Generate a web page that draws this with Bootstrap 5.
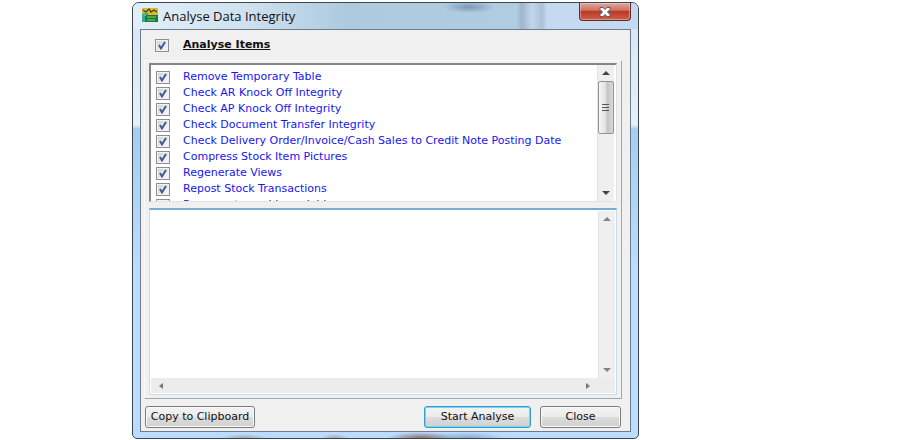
<!DOCTYPE html>
<html lang="en">
<head>
<meta charset="utf-8">
<meta name="viewport" content="width=device-width, initial-scale=1">
<title>Analyse Data Integrity</title>
<link href="https://cdn.jsdelivr.net/npm/bootstrap@5.3.0/dist/css/bootstrap.min.css" rel="stylesheet">
<style>
body{font-family:"DejaVu Sans",sans-serif;font-size:11px;line-height:16px;color:#111;background:#fff;padding:2px 264px 2px 132px}
.dialog{border:1px solid #3c4650;border-radius:7px 7px 5px 5px;padding:0 7px 6px;
  background:radial-gradient(ellipse 24px 4px at 22% 100%,#a9a9a2,transparent),
  radial-gradient(ellipse 14px 4px at 40% 100%,#a9a9a2,transparent),
  radial-gradient(ellipse 34px 6px at 57% 100%,#8b6f68,transparent),
  radial-gradient(ellipse 40px 6px at 66% 100%,#86a8cd,transparent),
  linear-gradient(#cfe2f2 0,#dceaf7 10%,#e4f0fa 28%,#a5cdf3 29%,#b9dcff 60%,#b9dcff 100%)}
.titlebar{height:26px;margin:0 -7px;padding:0 7px 0 8px;border-radius:6px 6px 0 0;
  background:radial-gradient(ellipse 26px 6px at 336px 4px,#7d98b3,transparent),
  linear-gradient(90deg,#e2eff9 0,#cfe2f0 22%,#aecadf 42%,#b0cce1 76%,#9db6cc 77%,#c2d7ea 79%,#a9c1d8 81%,#c5daf0 82%,#c3d9f0 100%)}
.caption{font:13px/26px "Open Sans",sans-serif;color:#111}
.close-x{width:52px;height:18px;border:1px solid #5d2b2b;border-top:0;border-radius:0 0 4px 4px;
  background:linear-gradient(#dea79c 0,#cf7363 42%,#b93a27 50%,#d0604a 100%);box-shadow:inset 0 0 0 1px #ffffff55}
.client{background:#f0f0f0;border:1px solid #6e7b88}
.head{height:30px;padding-left:14px}
.head b{margin-left:14px}
.frame{margin:0 8px 0 3px;padding:2px 4px 3px;border:1px solid #f9f9f9;border-right-color:#a6a6a6;border-bottom-color:#a6a6a6}
.tick{appearance:none;width:14px;height:13px;margin:0;flex:none;border:1px solid #8e8f8f;
  background:url("data:image/svg+xml,%3Csvg xmlns='http://www.w3.org/2000/svg' viewBox='0 0 12 11'%3E%3Cpath d='M3 5L5 8.5 9 2' fill='none' stroke='%233f5596' stroke-width='1.9'/%3E%3C/svg%3E") center/12px 11px no-repeat,linear-gradient(135deg,#cdd1d6,#fafafa);box-shadow:inset 0 0 0 1px #f2f2f2}
.items{height:139px;padding-right:2px;background:#fff;border:1px solid #e3e3e3;border-top:2px solid #858585;border-left:2px solid #858585}
.checks{padding:4px 0 0 5px;overflow:hidden}
.checks label{height:16px;color:#1616f0;gap:13px;white-space:nowrap}
.vbar{width:17px;background:#efefef;border-left:1px solid #e4e4e4}
.thumb{width:16px;height:53px;border:1px solid #929292;border-radius:2px;background:linear-gradient(90deg,#f6f6f6,#e3e3e3 45%,#c4c5c9 60%,#d7d8da)}
.output{height:187px;margin-top:6px;background:#fff;border:1px solid #c4def2;border-top:2px solid #76acd6;padding:1px}
.log{resize:none;border:0;outline:0;background:#fff}
.hbar{height:15px;background:#ececec;padding:0 7px}
.actions{padding:7px 9px 3px 4px;gap:9px}
.push{height:22px;padding:0;border:1px solid #7c7c7c;border-radius:3px;color:#111;line-height:20px;
  background:linear-gradient(#f3f3f3,#ebebeb 49%,#dddddd 50%,#d0d0d0);box-shadow:inset 0 0 0 1px #fafafa}
.push-main{border-color:#2f9fce;box-shadow:inset 0 0 0 1px #79d3f2}
.w-copy{width:110px}.w-start{width:107px}.w-close{width:81px}
svg{display:block}
</style>
<script src="https://cdn.jsdelivr.net/npm/bootstrap@5.3.0/dist/js/bootstrap.bundle.min.js"></script>
</head>
<body>
<main class="dialog">
  <header class="titlebar d-flex align-items-start">
    <svg class="mt-1" width="18" height="16" viewBox="0 0 18 16" aria-hidden="true"><path d="M1 1h16v7H1z" fill="#dcb92e"/><path d="M1 6h6v9H1z" fill="#3aa6a0"/><path d="M4 8h13v7H4z" fill="#157b3c"/><path d="M2 3l3 2 3-3 2 3 3-2 3 2" stroke="#49431d" stroke-width="1.300" fill="none"/><path d="M1 6l4 3M6 10h9M6 13h8" stroke="#87d64d" fill="none"/></svg>
    <span class="caption ms-1 flex-fill">Analyse Data Integrity</span>
    <button class="close-x p-0 d-flex align-items-center justify-content-center" type="button" aria-label="Close window"><svg width="14" height="12" viewBox="0 0 14 12"><path d="M2 1.500h3l2 2 2-2h3v2L9.500 6 12 8.500v2H9l-2-2-2 2H2v-2L4.500 6 2 3.500z" fill="#fff" stroke="#555b70"/></svg></button>
  </header>
  <div class="client">
    <div class="head d-flex align-items-center"><input class="tick" type="checkbox" id="all" checked><label for="all"><b class="text-decoration-underline">Analyse Items</b></label></div>
    <div class="frame">
      <div class="items d-flex">
        <div class="checks flex-fill">
          <label class="d-flex align-items-center"><input class="tick" type="checkbox" checked>Remove Temporary Table</label>
          <label class="d-flex align-items-center"><input class="tick" type="checkbox" checked>Check AR Knock Off Integrity</label>
          <label class="d-flex align-items-center"><input class="tick" type="checkbox" checked>Check AP Knock Off Integrity</label>
          <label class="d-flex align-items-center"><input class="tick" type="checkbox" checked>Check Document Transfer Integrity</label>
          <label class="d-flex align-items-center"><input class="tick" type="checkbox" checked>Check Delivery Order/Invoice/Cash Sales to Credit Note Posting Date</label>
          <label class="d-flex align-items-center"><input class="tick" type="checkbox" checked>Compress Stock Item Pictures</label>
          <label class="d-flex align-items-center"><input class="tick" type="checkbox" checked>Regenerate Views</label>
          <label class="d-flex align-items-center"><input class="tick" type="checkbox" checked>Repost Stock Transactions</label>
          <label class="d-flex align-items-center"><input class="tick" type="checkbox" checked>Recompute usable variables</label>
        </div>
        <div class="vbar d-flex flex-column align-items-center">
          <svg width="16" height="16" viewBox="0 0 16 16" aria-hidden="true"><path d="M4 10l4-4 4 4z" fill="#444"/></svg>
          <div class="thumb d-flex align-items-center justify-content-center"><svg width="8" height="8" viewBox="0 0 8 8" aria-hidden="true"><path d="M0 .5h7M0 3.500h7M0 6.500h7" stroke="#555"/></svg></div>
          <svg class="mt-auto" width="16" height="16" viewBox="0 0 16 16" aria-hidden="true"><path d="M4 6l4 4 4-4z" fill="#444"/></svg>
        </div>
      </div>
      <div class="output d-flex flex-column">
        <div class="d-flex flex-fill">
          <textarea class="log flex-fill p-0" aria-label="Analysis output" readonly></textarea>
          <div class="vbar d-flex flex-column justify-content-between align-items-center">
            <svg width="16" height="16" viewBox="0 0 16 16" aria-hidden="true"><path d="M4 10l4-4 4 4z" fill="#858585"/></svg>
            <svg width="16" height="16" viewBox="0 0 16 16" aria-hidden="true"><path d="M4 6l4 4 4-4z" fill="#858585"/></svg>
          </div>
        </div>
        <div class="hbar d-flex justify-content-between align-items-center pe-4">
          <svg width="6" height="8" viewBox="0 0 6 8" aria-hidden="true"><path d="M5 1v6L1 4z" fill="#777"/></svg>
          <svg width="6" height="8" viewBox="0 0 6 8" aria-hidden="true"><path d="M1 1v6l4-3z" fill="#777"/></svg>
        </div>
      </div>
    </div>
    <div class="actions d-flex">
      <button class="push w-copy me-auto" type="button">Copy to Clipboard</button>
      <button class="push push-main w-start" type="button">Start Analyse</button>
      <button class="push w-close" type="button">Close</button>
    </div>
  </div>
</main>
</body>
</html>
